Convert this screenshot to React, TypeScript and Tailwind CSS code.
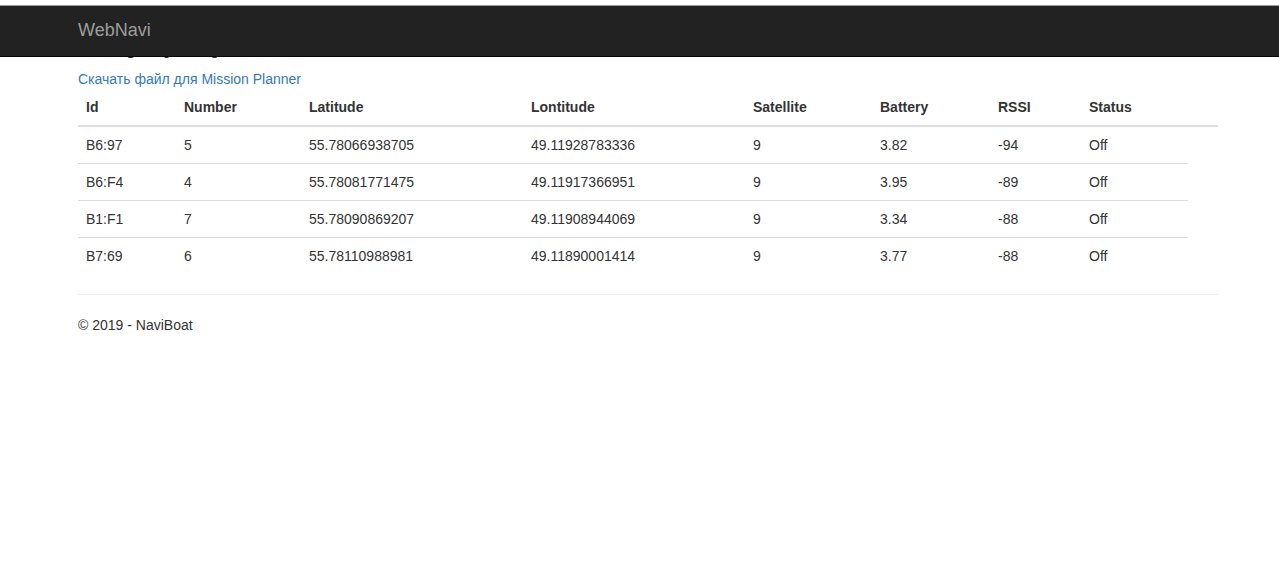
const rows = [
  ['B6:97', '5', '55.78066938705', '49.11928783336', '9', '3.82', '-94', 'Off'],
  ['B6:F4', '4', '55.78081771475', '49.11917366951', '9', '3.95', '-89', 'Off'],
  ['B1:F1', '7', '55.78090869207', '49.11908944069', '9', '3.34', '-88', 'Off'],
  ['B7:69', '6', '55.78110988981', '49.11890001414', '9', '3.77', '-88', 'Off'],
]

const headers = ['Id', 'Number', 'Latitude', 'Lontitude', 'Satellite', 'Battery', 'RSSI', 'Status']

export default function App() {
  return (
    <div className="relative min-h-[585px] bg-white font-['Liberation_Sans',Arial,sans-serif] text-[14px] leading-[20px] text-[#333]">
      {/* fixed navbar lying over the page title */}
      <nav className="absolute left-0 right-0 top-[5px] z-10 h-[52px] border-y border-t-[#9a9a9a] border-b-[#080808] bg-[#222]">
        <div className="ml-[78px] flex h-full items-center pb-[2px]">
          <span className="text-[18px] leading-[20px] text-[#9d9d9d]">WebNavi</span>
        </div>
      </nav>

      <main className="ml-[78px] w-[1140px] pt-[25px]">
        <h2 className="mb-[11px] text-[30px] font-bold leading-[33px]">Текущее расположение</h2>
        <a href="#" className="block text-[#337ab7]">
          Скачать файл для Mission Planner
        </a>

        <table className="w-full table-fixed border-collapse">
          <colgroup>
            <col className="w-[98px]" />
            <col className="w-[125px]" />
            <col className="w-[222px]" />
            <col className="w-[222px]" />
            <col className="w-[127px]" />
            <col className="w-[118px]" />
            <col className="w-[91px]" />
            <col className="w-[107px]" />
            <col className="w-[30px]" />
          </colgroup>
          <thead>
            <tr>
              {headers.map((h) => (
                <th key={h} className="border-b-2 border-[#ddd] p-2 text-left align-bottom font-bold">
                  {h}
                </th>
              ))}
              <th className="border-b-2 border-[#ddd] p-2"></th>
            </tr>
          </thead>
          <tbody>
            {rows.map((r, i) => (
              <tr key={r[0]}>
                {r.map((c, j) => (
                  <td key={j} className={i === 0 ? 'p-2 align-top' : 'border-t border-[#ddd] p-2 align-top'}>
                    {c}
                  </td>
                ))}
              </tr>
            ))}
          </tbody>
        </table>

        <hr className="mt-[20px] mb-[20px] border-t border-[#eee]" />
        <footer>
          <p>© 2019 - NaviBoat</p>
        </footer>
      </main>
    </div>
  )
}
